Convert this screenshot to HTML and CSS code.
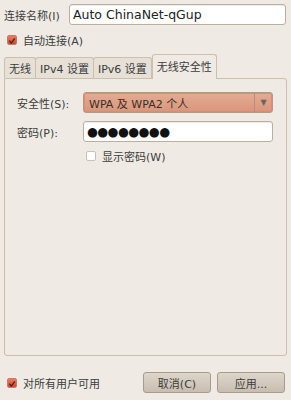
FILE: index.html
```html
<!DOCTYPE html>
<html>
  <head>
    <meta charset="utf-8" />
    <link rel="stylesheet" href="styles.css" />
  </head>
  <body>
    <div class="dialog">
      <!-- connection name -->
      <div class="name-row">
        <span class="name-label">连接名称(I)</span>
        <div class="entry name-entry">Auto ChinaNet-qGup</div>
      </div>

      <div class="check-row auto-row">
        <span class="check on">
          <svg width="10" height="10" viewBox="0 0 10 10">
            <path d="M2.2 5.1 L4.2 7.6 L8 2.3" fill="none" stroke="#3b2a22" stroke-width="1.7" stroke-linecap="round" stroke-linejoin="round" />
          </svg>
        </span>
        <span>自动连接(A)</span>
      </div>

      <!-- notebook with tabs -->
      <div class="notebook">
        <div class="tabs">
          <div class="tab">无线</div>
          <div class="tab">IPv4 设置</div>
          <div class="tab">IPv6 设置</div>
          <div class="tab active">无线安全性</div>
        </div>
        <div class="page">
          <div class="form">
            <span class="label">安全性(S):</span>
            <div class="combo">
              <span class="combo-text">WPA 及 WPA2 个人</span>
              <span class="combo-arrow">▼</span>
            </div>
            <span class="label">密码(P):</span>
            <div class="entry pw">●●●●●●●●</div>
            <span></span>
            <div class="check-row">
              <span class="check"></span>
              <span>显示密码(W)</span>
            </div>
          </div>
        </div>
      </div>

      <!-- bottom buttons -->
      <div class="footer">
        <div class="check-row">
          <span class="check on">
            <svg width="10" height="10" viewBox="0 0 10 10">
              <path d="M2.2 5.1 L4.2 7.6 L8 2.3" fill="none" stroke="#3b2a22" stroke-width="1.7" stroke-linecap="round" stroke-linejoin="round" />
            </svg>
          </span>
          <span>对所有用户可用</span>
        </div>
        <div class="buttons">
          <button class="btn">取消(C)</button>
          <button class="btn">应用...</button>
        </div>
      </div>
    </div>
  </body>
</html>
```

FILE: styles.css
```css
html {
  height: 100%;
}
body {
  margin: 0;
  height: 100%;
  background-color: #efebe4;
  color: #3c3c3c;
  font-family: "DejaVu Sans", "Noto Sans CJK SC", sans-serif;
  font-size: 11px;
}
.dialog {
  display: flex;
  flex-direction: column;
  height: 100%;
}
.name-row {
  display: flex;
  align-items: center;
  padding: 4px 5px 0 4px;
}
.name-label {
  width: 65px;
}
.entry {
  box-sizing: border-box;
  height: 21px;
  background-color: #ffffff;
  border: 1px solid #b9ae9f;
  border-radius: 3px;
  box-shadow: inset 0 1px 1px rgba(0, 0, 0, 0.08);
  display: flex;
  align-items: center;
  padding: 0 3px;
}
.name-entry {
  flex: 1;
  font-size: 12.5px;
  color: #222222;
}
.check-row {
  display: flex;
  align-items: center;
  gap: 6px;
}
.auto-row {
  margin: 7px 0 0 7px;
}
.check {
  box-sizing: border-box;
  width: 10px;
  height: 10px;
  border: 1px solid #c9c1b6;
  border-radius: 2px;
  background-color: #ffffff;
  display: flex;
}
.check.on {
  border-color: #c07d6c;
  background: linear-gradient(#f07a5c, #d6472c);
}
.notebook {
  flex: 1;
  display: flex;
  flex-direction: column;
  margin: 6px 4px 0 4px;
}
.tabs {
  display: flex;
  align-items: flex-end;
  height: 24px;
}
.tab {
  box-sizing: border-box;
  height: 21px;
  padding: 0 4px;
  display: flex;
  align-items: center;
  background-color: #e6e0d7;
  border: 1px solid #cbbfae;
  border-bottom: none;
  border-radius: 3px 3px 0 0;
  margin-right: -1px;
}
.tab.active {
  height: 25px;
  margin-left: 1px;
  margin-bottom: -1px;
  padding: 0 4px 2px 4px;
  background-color: #efebe4;
  position: relative;
}
.page {
  flex: 1;
  border: 1px solid #cdbfa9;
  border-radius: 0 3px 3px 3px;
  padding: 13px 13px 0 12px;
}
.form {
  display: grid;
  grid-template-columns: 66px 1fr;
  grid-template-rows: 21px 21px 12px;
  row-gap: 8px;
  align-items: center;
}
.form .check-row {
  margin-left: 3px;
}
.combo {
  box-sizing: border-box;
  height: 21px;
  display: flex;
  align-items: stretch;
  border: 1px solid #b09a8c;
  border-radius: 3px;
  background: linear-gradient(#e4ac94, #d8967b);
  box-shadow: inset 0 0 0 1px #ec8470;
}
.combo-text {
  flex: 1;
  display: flex;
  align-items: center;
  padding-left: 5px;
  color: #3a2e28;
}
.combo-arrow {
  width: 17px;
  display: flex;
  align-items: center;
  justify-content: center;
  border-left: 1px solid #b98c78;
  color: #6e635c;
  font-size: 8px;
}
.pw {
  font-size: 12.5px;
  letter-spacing: -0.6px;
  color: #111111;
}
.footer {
  display: flex;
  align-items: center;
  justify-content: space-between;
  padding: 16px 6px 7px 7px;
}
.buttons {
  display: flex;
  gap: 6px;
}
.btn {
  width: 68px;
  height: 21px;
  font-family: "DejaVu Sans", "Noto Sans CJK SC", sans-serif;
  font-size: 11px;
  color: #3c3c3c;
  background: linear-gradient(#ded6cb, #c8bdaf);
  border: 1px solid #a89b8b;
  border-radius: 3px;
  padding: 0;
}
```
